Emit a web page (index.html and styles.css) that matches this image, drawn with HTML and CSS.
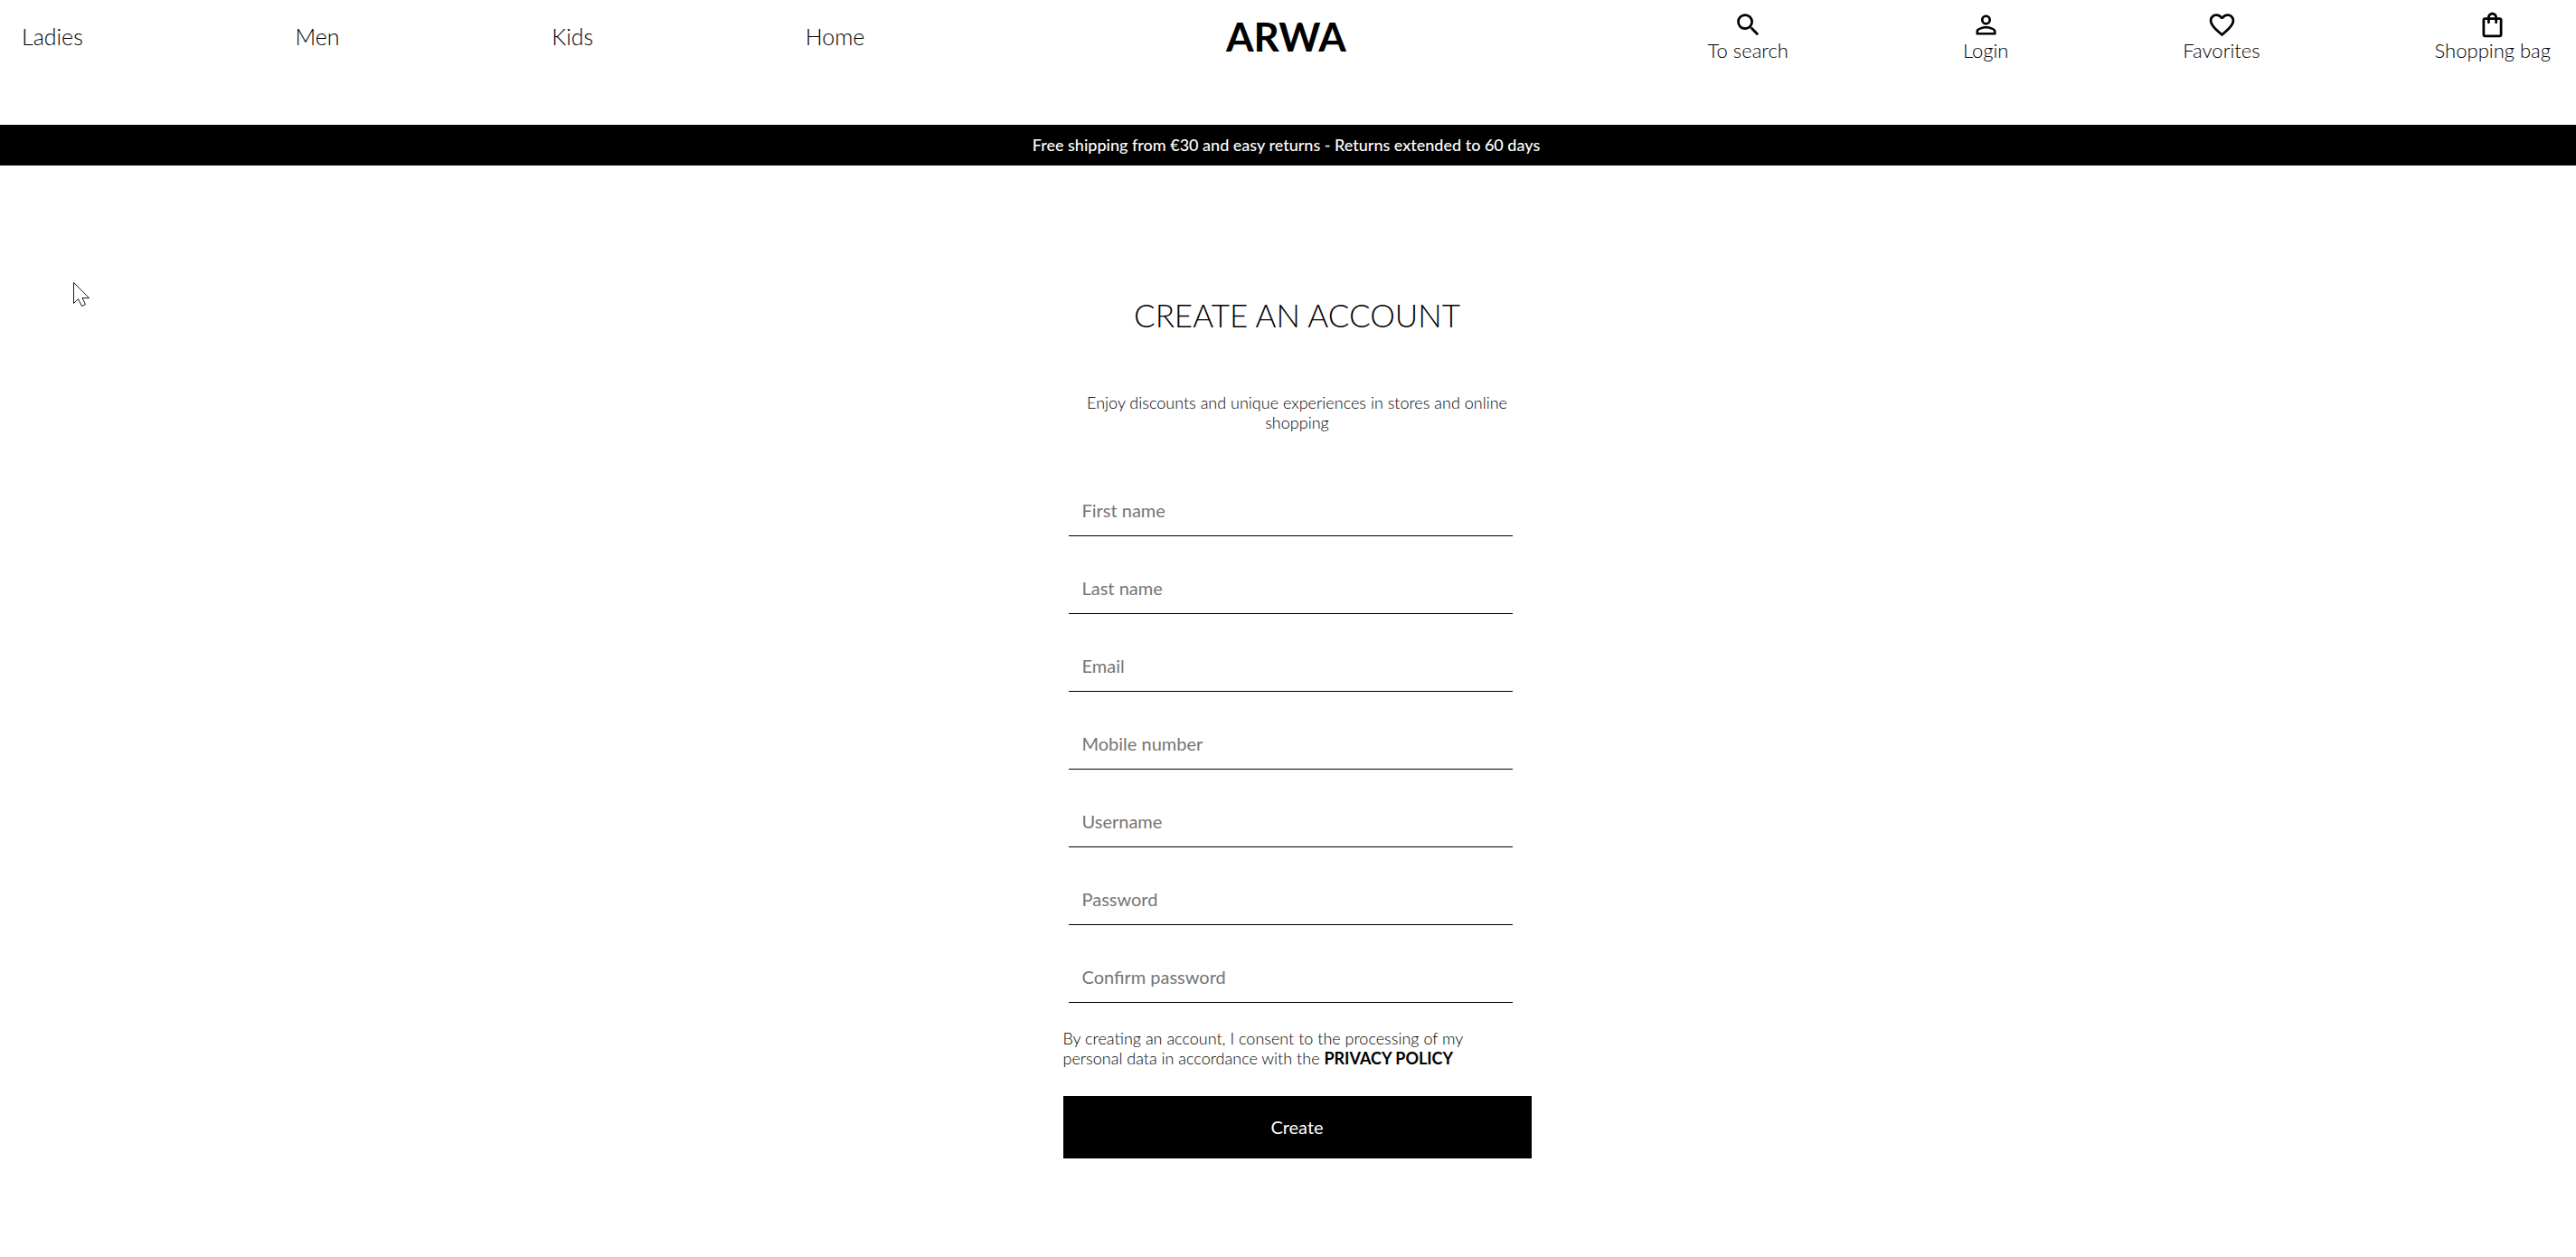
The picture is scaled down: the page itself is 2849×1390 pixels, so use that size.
FILE: index.html
```html
<!DOCTYPE html>
<html lang="en">
<head>
  <meta charset="utf-8">
  <meta name="viewport" content="width=device-width, initial-scale=1">
  <title>ARWA - Create an account</title>
  <link rel="stylesheet" href="styles.css">
</head>
<body>
  <header class="header">
    <nav class="nav" aria-label="Departments">
      <a class="nav-link" href="#">Ladies</a>
      <a class="nav-link" href="#">Men</a>
      <a class="nav-link" href="#">Kids</a>
      <a class="nav-link" href="#">Home</a>
    </nav>
    <a class="logo" href="#">ARWA</a>
    <nav class="actions" aria-label="Shop tools">
      <a class="action" href="#">
        <svg class="icon" viewBox="0 0 24 24" aria-hidden="true"><path d="M15.5 14h-.79l-.28-.27A6.471 6.471 0 0 0 16 9.500 6.500 6.500 0 1 0 9.500 16c1.610 0 3.090-.590 4.230-1.570l.270.280v.790l5 4.990L20.490 19l-4.990-5zm-6 0C7.010 14 5 11.990 5 9.500S7.010 5 9.500 5 14 7.010 14 9.500 11.990 14 9.500 14z"/></svg>
        <span>To search</span>
      </a>
      <a class="action" href="#">
        <svg class="icon" viewBox="0 0 24 24" aria-hidden="true"><path d="M12 5.900a2.100 2.100 0 1 1 0 4.200 2.100 2.100 0 0 1 0-4.200m0 9c2.970 0 6.100 1.460 6.100 2.100v1.100H5.900V17c0-.640 3.130-2.100 6.100-2.100M12 4C9.790 4 8 5.790 8 8s1.790 4 4 4 4-1.790 4-4-1.790-4-4-4zm0 9c-2.670 0-8 1.340-8 4v3h16v-3c0-2.660-5.330-4-8-4z"/></svg>
        <span>Login</span>
      </a>
      <a class="action" href="#">
        <svg class="icon" viewBox="0 0 24 24" aria-hidden="true"><path d="M16.500 3c-1.740 0-3.410.810-4.500 2.090C10.910 3.810 9.240 3 7.500 3 4.420 3 2 5.420 2 8.500c0 3.780 3.400 6.860 8.550 11.540L12 21.350l1.450-1.320C18.600 15.360 22 12.280 22 8.500 22 5.420 19.580 3 16.500 3zm-4.400 15.550l-.100.100-.100-.100C7.140 14.240 4 11.390 4 8.500 4 6.500 5.500 5 7.500 5c1.540 0 3.040.990 3.570 2.360h1.870C13.460 5.990 14.960 5 16.500 5c2 0 3.500 1.500 3.500 3.500 0 2.890-3.140 5.740-7.900 10.050z"/></svg>
        <span>Favorites</span>
      </a>
      <a class="action" href="#">
        <svg class="icon" viewBox="0 0 24 24" aria-hidden="true"><path d="M18 6h-2c0-2.210-1.790-4-4-4S8 3.790 8 6H6c-1.100 0-2 .9-2 2v12c0 1.100.9 2 2 2h12c1.100 0 2-.9 2-2V8c0-1.100-.9-2-2-2zm-6-2c1.100 0 2 .9 2 2h-4c0-1.100.9-2 2-2zm6 16H6V8h2v2c0 .55.45 1 1 1s1-.45 1-1V8h4v2c0 .55.45 1 1 1s1-.45 1-1V8h2v12z"/></svg>
        <span>Shopping bag</span>
      </a>
    </nav>
  </header>

  <p class="banner">Free shipping from €30 and easy returns - Returns extended to 60 days</p>

  <main class="main">
    <form class="form">
      <h1 class="title">CREATE AN ACCOUNT</h1>
      <p class="intro">Enjoy discounts and unique experiences in stores and online shopping</p>
      <div class="fields">
        <input class="field" type="text" placeholder="First name" aria-label="First name">
        <input class="field" type="text" placeholder="Last name" aria-label="Last name">
        <input class="field" type="email" placeholder="Email" aria-label="Email">
        <input class="field" type="tel" placeholder="Mobile number" aria-label="Mobile number">
        <input class="field" type="text" placeholder="Username" aria-label="Username">
        <input class="field" type="password" placeholder="Password" aria-label="Password">
        <input class="field" type="password" placeholder="Confirm password" aria-label="Confirm password">
      </div>
      <p class="consent">By creating an account, I consent to the processing of my personal data in accordance with the <a class="policy" href="#">PRIVACY POLICY</a></p>
      <button class="submit" type="button">Create</button>
    </form>
  </main>

  <svg class="pointer" viewBox="0 0 18 28" aria-hidden="true"><path d="M.5.5v23l5-5 4 8 4-2-3.500-7h7.500z"/></svg>
</body>
</html>
```

FILE: styles.css
```css
* {
  box-sizing: border-box;
}

body {
  position: relative;
  margin: 0;
  background: #fff;
  color: #000;
  font-family: Lato, "Open Sans", sans-serif;
  font-weight: 400;
}

a {
  color: inherit;
  text-decoration: none;
}

/* Header */
.header {
  display: grid;
  grid-template-columns: 1fr auto 1fr;
  align-items: start;
  height: 138px;
  padding: 11px 28px 0 24px;
}

.nav,
.actions {
  display: flex;
  justify-content: space-between;
  font-weight: 300;
}

.nav {
  width: 70%;
  padding-top: 13px;
}

.nav-link {
  font-size: 25px;
  line-height: 32px;
}

.logo {
  font-size: 44px;
  font-weight: 700;
  line-height: 58px;
}

.actions {
  justify-self: end;
  width: 70%;
}

.action {
  display: flex;
  flex-direction: column;
  align-items: center;
  font-size: 22px;
  line-height: 24px;
}

.icon {
  width: 33px;
  height: 33px;
}

/* Shipping notice */
.banner {
  margin: 0;
  padding-right: 4px;
  background: #000;
  color: #fff;
  font-size: 18px;
  font-weight: 500;
  line-height: 45px;
  text-align: center;
}

/* Account form */
.main {
  display: flex;
  justify-content: center;
  padding: 138px 20px 108px 40px;
}

.form {
  width: 100%;
  max-width: 518px;
}

.title {
  margin: 0;
  font-size: 35px;
  font-weight: 300;
  line-height: 54px;
  text-align: center;
}

.intro,
.consent {
  font-size: 18px;
  font-weight: 300;
  line-height: 22px;
}

.intro {
  margin: 59px 20px 0;
  text-align: center;
}

.fields {
  display: grid;
  gap: 26px;
  margin: 55px 21px 0 6px;
}

.field {
  width: 100%;
  height: 60px;
  padding: 2px 15px 0;
  border: 0;
  border-bottom: 1px solid #000;
  background: none;
  color: #000;
  font: inherit;
  font-size: 20px;
}

.field::placeholder {
  color: #757575;
}

.consent {
  margin: 28px 0 31px;
  padding-right: 40px;
}

.policy {
  font-weight: 700;
}

.submit {
  width: 100%;
  height: 69px;
  padding-bottom: 3px;
  border: 0;
  background: #000;
  color: #fff;
  font: inherit;
  font-size: 20px;
}

/* Mouse pointer lying over the page */
.pointer {
  position: absolute;
  top: 312px;
  left: 81px;
  width: 18px;
  height: 28px;
  fill: #fff;
  stroke: #1c1c28;
}
```
